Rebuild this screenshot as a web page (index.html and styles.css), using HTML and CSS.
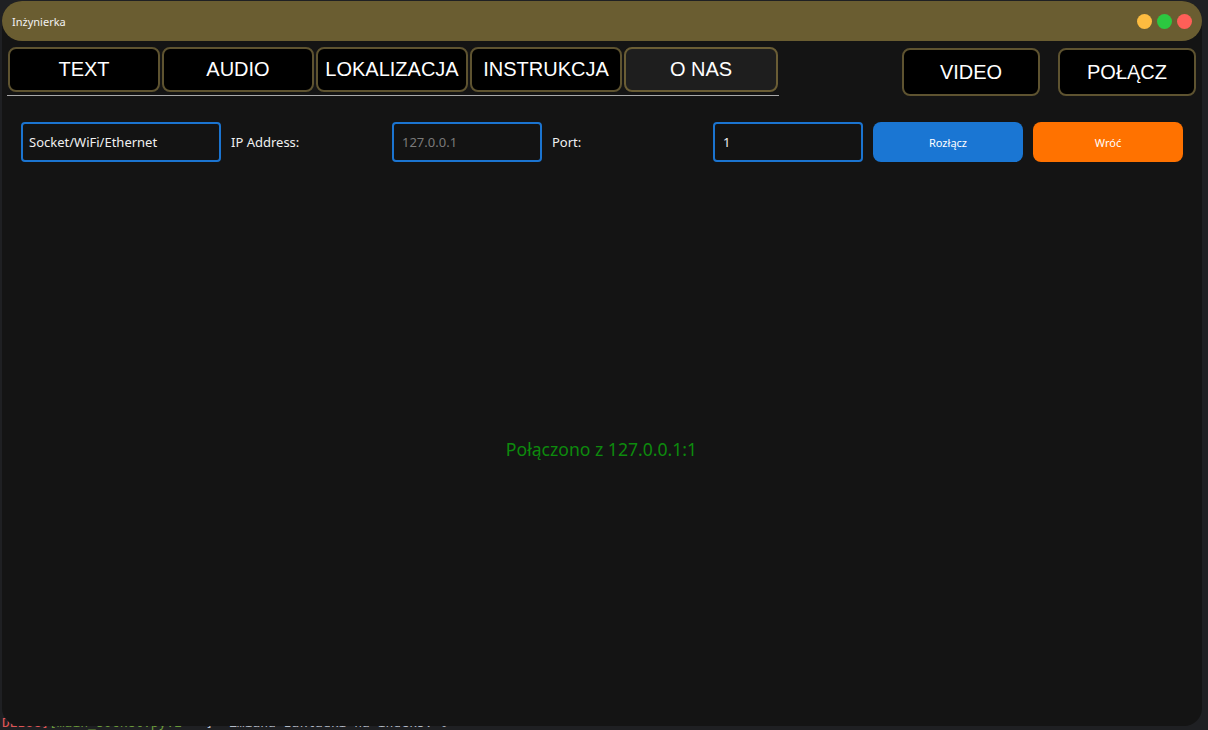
FILE: index.html
```html
<!DOCTYPE html>
<html lang="pl">
<head>
<meta charset="utf-8">
<title>Inżynierka</title>
<link rel="stylesheet" href="styles.css">
</head>
<body>
<div class="terminal"><span class="t-red">DEBUG]</span><span class="t-green">[main_socket.py:2</span><span class="t-grey">   ]  Zmiana zakładki na indeks: 0</span></div>
<div class="window">
  <div class="titlebar">
    <span class="title">Inżynierka</span>
    <div class="lights">
      <span class="light yellow"></span>
      <span class="light green"></span>
      <span class="light red"></span>
    </div>
  </div>
  <div class="body">
    <div class="toprow">
      <div class="tabs">
        <div class="tablist">
          <button class="tab">TEXT</button>
          <button class="tab">AUDIO</button>
          <button class="tab">LOKALIZACJA</button>
          <button class="tab">INSTRUKCJA</button>
          <button class="tab active">O NAS</button>
        </div>
        <div class="tabline"></div>
      </div>
      <div class="actions">
        <button class="action">VIDEO</button>
        <button class="action">POŁĄCZ</button>
      </div>
    </div>
    <div class="connrow">
      <div class="field combo">Socket/WiFi/Ethernet</div>
      <div class="label">IP Address:</div>
      <div class="field placeholder">127.0.0.1</div>
      <div class="label">Port:</div>
      <div class="field">1</div>
      <button class="btn blue">Rozłącz</button>
      <button class="btn orange">Wróć</button>
    </div>
    <div class="status">Połączono z 127.0.0.1:1</div>
  </div>
</div>
</body>
</html>
```
FILE: styles.css
```css
html, body {
  margin: 0;
  padding: 0;
}
body {
  width: 1208px;
  height: 730px;
  background: #1f2023;
  position: relative;
  overflow: hidden;
  font-family: "Noto Sans", "Open Sans", sans-serif;
}
.terminal {
  position: absolute;
  left: 2px;
  top: 715px;
  font-family: "DejaVu Sans Mono", monospace;
  font-size: 13px;
  line-height: 16px;
  white-space: pre;
}
.t-red { color: #e05555; }
.t-green { color: #6a9a3a; }
.t-grey { color: #b4bcc8; }

.window {
  position: absolute;
  left: 2px;
  top: 1px;
  width: 1200px;
  height: 725px;
  display: flex;
  flex-direction: column;
  background: #141414;
  border-radius: 20px 20px 18px 18px;
}
.titlebar {
  height: 40px;
  flex: none;
  background: #6a5d31;
  border-radius: 20px;
  display: flex;
  align-items: center;
  justify-content: space-between;
  padding: 0 10px 0 10px;
}
.title {
  color: #f2f2f2;
  font-size: 11px;
}
.lights {
  display: flex;
  gap: 5px;
}
.light {
  width: 15px;
  height: 15px;
  border-radius: 50%;
}
.yellow { background: #fdbc40; }
.green { background: #2cc840; }
.red { background: #fe5f58; }

.body {
  flex: 1;
  display: flex;
  flex-direction: column;
  padding: 6px 6px 0 5px;
}
.toprow {
  display: flex;
  justify-content: space-between;
  align-items: flex-start;
}
.tabs {
  display: flex;
  flex-direction: column;
  width: 772px;
}
.tablist {
  display: flex;
  gap: 2px;
  padding-left: 1px;
}
button {
  font: inherit;
  margin: 0;
  cursor: pointer;
}
.tab {
  width: 152px;
  height: 45px;
  background: #000;
  color: #fff;
  border: 2px solid #5e5330;
  border-radius: 8px;
  font-family: "Liberation Sans", Arial, sans-serif;
  font-size: 20px;
  padding: 0;
}
.tab.active {
  width: 154px;
  background: #1e1e1e;
  border-color: #6a5d35;
}
.tabline {
  margin-top: 3px;
  height: 1px;
  background: #a8a8a8;
}
.actions {
  display: flex;
  gap: 18px;
  padding-top: 1px;
}
.action {
  width: 138px;
  height: 48px;
  background: #000;
  color: #fff;
  border: 2px solid #5e5330;
  border-radius: 8px;
  font-family: "Liberation Sans", Arial, sans-serif;
  font-size: 20px;
  padding: 0;
}

.connrow {
  display: flex;
  align-items: center;
  gap: 10px;
  margin-top: 26px;
  padding-left: 14px;
}
.field {
  width: 150px;
  height: 40px;
  box-sizing: border-box;
  border: 2px solid #1b74d0;
  border-radius: 4px;
  background: #131313;
  color: #f0f0f0;
  font-size: 13px;
  display: flex;
  align-items: center;
  padding-left: 8px;
}
.field.combo {
  width: 200px;
  padding-left: 6px;
}
.field.placeholder {
  color: #7a7a7a;
}
.label {
  width: 151px;
  color: #f0f0f0;
  font-size: 13px;
}
.btn {
  width: 150px;
  height: 40px;
  border: none;
  border-radius: 8px;
  color: #fff;
  font-size: 11px;
  padding: 0;
}
.btn.blue { background: #1a76d3; }
.btn.orange { background: #ff7200; }

.status {
  flex: 1;
  display: flex;
  align-items: center;
  justify-content: center;
  color: #0d8a0d;
  font-size: 17.6px;
  padding-top: 10px;
}
```
